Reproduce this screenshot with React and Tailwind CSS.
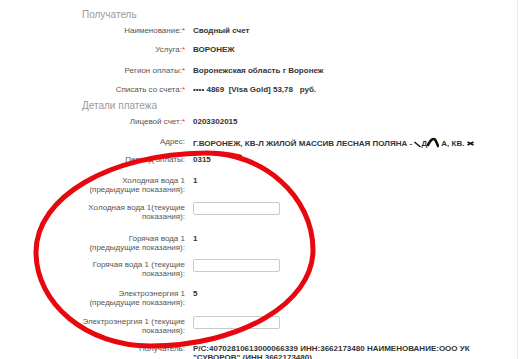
import React from 'react';

const Row = ({ h, label, star, children }) => (
  <div className={`flex items-start ${h}`}>
    <div className="w-[185px] shrink-0 text-right text-[8px] leading-[9px] text-[#555]">
      {label}
      {star && <span className="text-[#e0312b]">*</span>}
    </div>
    <div className="ml-[8px] text-[8px] leading-[9px] font-bold text-[#333]">{children}</div>
  </div>
);

const Field = () => (
  <div className="-mt-[1px] h-[13px] w-[87px] rounded-[2px] border border-[#c9c9c9] bg-white" />
);

export default function App() {
  return (
    <div className="relative h-[359px] w-[519px] overflow-hidden bg-white font-['Liberation_Sans',Arial,sans-serif]">
      <div className="absolute right-[1px] top-0 h-full w-[1px] bg-[#ececec]" />
      <div className="flex flex-col pt-[9px]">
        <div className="h-[17px] pl-[82px] text-[10px] leading-[12px] text-[#9a9a9a]">Получатель</div>
        <Row h="h-[19px]" label="Наименование:" star>Сводный счет</Row>
        <Row h="h-[21px]" label="Услуга:" star>ВОРОНЕЖ</Row>
        <Row h="h-[19px]" label="Регион оплаты:" star>Воронежская область г Воронеж</Row>
        <Row h="h-[15px]" label="Списать со счета:" star>
          <span>•••• 4869&nbsp;&nbsp;[Visa Gold] 53,78&nbsp;&nbsp; руб.</span>
        </Row>
        <div className="h-[17px] pl-[82px] text-[10px] leading-[12px] text-[#9a9a9a]">Детали платежа</div>
        <Row h="h-[20px]" label="Лицевой счет:" star>0203302015</Row>
        <Row h="h-[18px]" label="Адрес:">
          <span className="whitespace-nowrap">
            Г.ВОРОНЕЖ, КВ-Л ЖИЛОЙ МАССИВ ЛЕСНАЯ ПОЛЯНА -{' '}
            <svg className="inline align-[-2px]" width="7" height="9" viewBox="0 0 7 9">
              <path d="M0.5 3 L6.5 8" stroke="#111" strokeWidth="1.5" fill="none" />
            </svg>
            Д
            <svg className="inline align-[-2px]" width="12" height="11" viewBox="0 0 12 11">
              <path d="M0.5 9 C3 3 6 1 8 2.5 C9.5 4.5 10.5 8 11.5 10" stroke="#111" strokeWidth="2.6" fill="none" />
            </svg>
            {' '}А, КВ.{' '}
            <svg className="inline align-[-1px]" width="7" height="7" viewBox="0 0 7 7">
              <path d="M0.5 2 L6.5 5 M0.5 5 L6.5 2" stroke="#111" strokeWidth="1.4" fill="none" />
            </svg>
          </span>
        </Row>
        <Row h="h-[21px]" label="Период оплаты:">0315</Row>
        <Row h="h-[27px]" label={<>Холодная вода 1<br />(предыдущие показания):</>}>1</Row>
        <Row h="h-[31px]" label={<>Холодная вода 1(текущие<br />показания):</>}><Field /></Row>
        <Row h="h-[26px]" label={<>Горячая вода 1<br />(предыдущие показания):</>}>1</Row>
        <Row h="h-[29px]" label={<>Горячая вода 1 (текущие<br />показания):</>}><Field /></Row>
        <Row h="h-[28px]" label={<>Электроэнергия 1<br />(предыдущие показания):</>}>5</Row>
        <Row h="h-[27px]" label={<>Электроэнергия 1 (текущие<br />показания):</>}><Field /></Row>
        <Row h="h-[20px]" label="Получатель:">
          Р/С:40702810613000066339 ИНН:3662173480 НАИМЕНОВАНИЕ:ООО УК<br />"СУВОРОВ" (ИНН 3662173480)
        </Row>
      </div>
      <svg className="pointer-events-none absolute left-0 top-0" width="519" height="359" viewBox="0 0 519 359">
        <path
          d="M205 153 C262 152 313 196 313 250 C313 303 240 346 150 346 C87 346 36 304 36 252 C36 197 110 154 205 153 C222 153 232 155 240 157"
          stroke="#e8070f"
          strokeWidth="5"
          fill="none"
          strokeLinecap="round"
        />
      </svg>
    </div>
  );
}
